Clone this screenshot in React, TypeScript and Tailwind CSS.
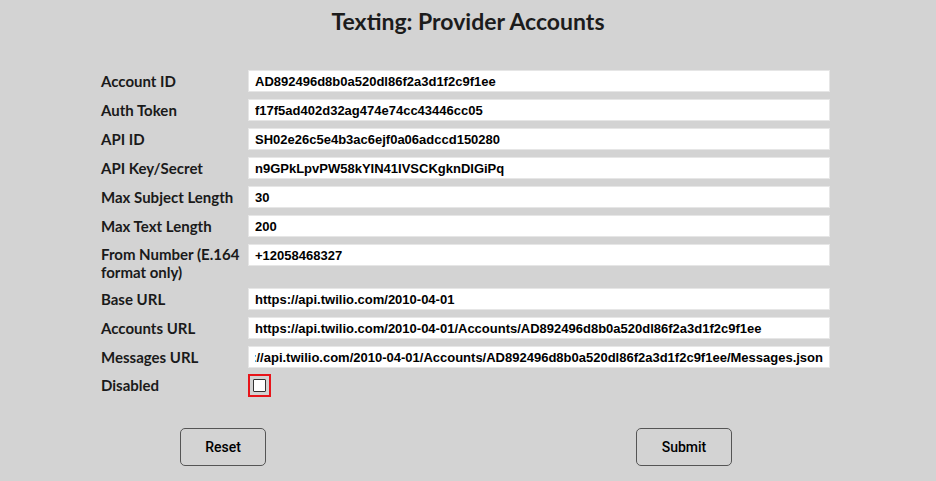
import { useState } from 'react';

const fields: { label: string; value: string; tall?: boolean }[] = [
  { label: 'Account ID', value: 'AD892496d8b0a520dl86f2a3d1f2c9f1ee' },
  { label: 'Auth Token', value: 'f17f5ad402d32ag474e74cc43446cc05' },
  { label: 'API ID', value: 'SH02e26c5e4b3ac6ejf0a06adccd150280' },
  { label: 'API Key/Secret', value: 'n9GPkLpvPW58kYIN41IVSCKgknDIGiPq' },
  { label: 'Max Subject Length', value: '30' },
  { label: 'Max Text Length', value: '200' },
  { label: 'From Number (E.164 format only)', value: '+12058468327', tall: true },
  { label: 'Base URL', value: 'https://api.twilio.com/2010-04-01' },
  {
    label: 'Accounts URL',
    value: 'https://api.twilio.com/2010-04-01/Accounts/AD892496d8b0a520dl86f2a3d1f2c9f1ee',
  },
  {
    label: 'Messages URL',
    value:
      'https://api.twilio.com/2010-04-01/Accounts/AD892496d8b0a520dl86f2a3d1f2c9f1ee/Messages.json',
  },
];

const App = () => {
  const [disabled, setDisabled] = useState(false);

  return (
    <div className="min-h-[481px] w-full bg-[#d3d3d3] font-['Lato','Liberation_Sans',sans-serif] text-[#1a1a1a]">
      <h1 className="pt-[6px] text-center text-[23px] font-bold leading-[30px] text-[#1c1c1c]">
        Texting: Provider Accounts
      </h1>

      <div className="ml-[101px] mt-[34px] w-[729px]">
        <div className="grid grid-cols-[147px_582px] gap-y-[7px]">
          {fields.map((f) => (
            <div key={f.label} className="contents">
              <label
                className={`pr-[4px] text-[15px] font-bold leading-[18px] ${f.tall ? 'pt-[1px]' : 'pt-[2px]'}`}
              >
                {f.label}
              </label>
              <div>
                <input
                  type="text"
                  defaultValue={f.value}
                  dir={f.label === 'Messages URL' ? 'rtl' : 'ltr'}
                  className="block h-[22px] w-full border border-[#e6e6e6] bg-white px-[6px] font-['Liberation_Sans',Arial,sans-serif] text-[13px] font-bold text-black outline-none"
                />
              </div>
            </div>
          ))}
          <label className="pt-[1px] text-[15px] font-bold leading-[18px]">Disabled</label>
          <div className="-mt-[1px]">
            <span className="inline-flex h-[23px] w-[23px] items-center justify-center border-2 border-[#e8141a] bg-[#d3d3d3]">
              <input
                type="checkbox"
                checked={disabled}
                onChange={(e) => setDisabled(e.target.checked)}
                className="m-0 h-[13px] w-[13px] appearance-none rounded-[1px] border border-[#333] bg-white checked:bg-[#0075ff]"
              />
            </span>
          </div>
        </div>
      </div>

      <div className="mt-[30px] flex">
        <button className="ml-[180px] h-[38px] w-[86px] rounded-[5px] border border-[#555] bg-transparent font-['Roboto',sans-serif] text-[14px] font-medium text-black">
          Reset
        </button>
        <button className="ml-[370px] h-[38px] w-[96px] rounded-[5px] border border-[#555] bg-transparent font-['Roboto',sans-serif] text-[14px] font-medium text-black">
          Submit
        </button>
      </div>
    </div>
  );
};

export default App;
